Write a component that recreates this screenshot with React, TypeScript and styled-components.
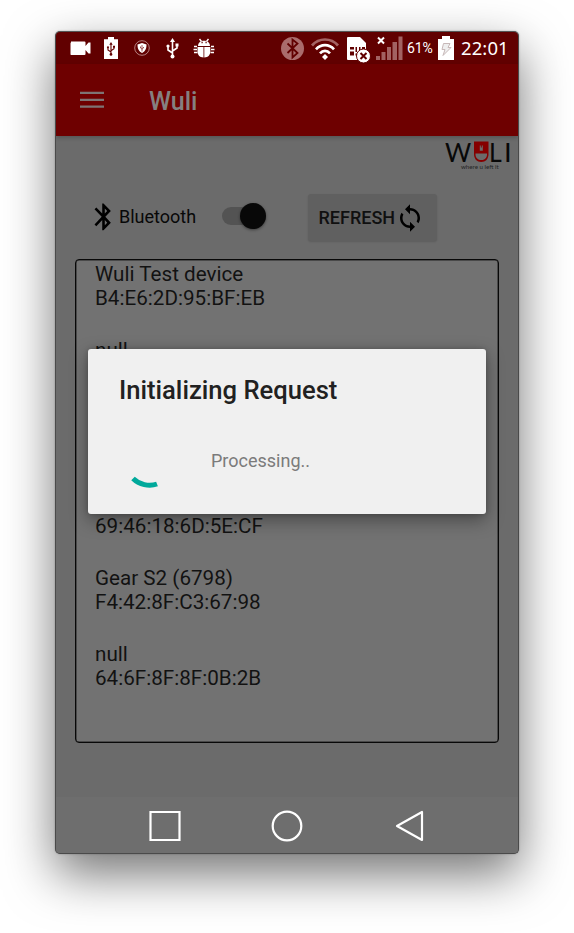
import React from "react";
import styled, { createGlobalStyle } from "styled-components";

const GlobalStyle = createGlobalStyle`
  * { box-sizing: border-box; }
  body { margin: 0; background: #fff; font-family: Roboto, "Liberation Sans", sans-serif; }
  svg { display: block; flex: none; }
`;

const Stage = styled.main`
  height: 933px;
  padding: 31px 55px 0;
  overflow: hidden;
`;

const Phone = styled.div`
  width: 464px;
  height: 823px;
  border-radius: 5px;
  border: 1px solid #4a4a4a;
  border-top-color: #555;
  background: #6b6b6b;
  box-shadow: 0 20px 50px rgba(0, 0, 0, 0.55), 0 0 2px rgba(0, 0, 0, 0.3);
`;

const Screen = styled.div`
  position: relative;
  height: 100%;
  border-radius: 4px;
  overflow: hidden;
  display: flex;
  flex-direction: column;
`;

const StatusBar = styled.header`
  height: 32px;
  flex: none;
  background: #610000;
  display: flex;
  justify-content: space-between;
  color: #fff;
`;

const StatusGroup = styled.div`
  display: flex;
  align-items: center;
  height: 32px;
`;

const Battery = styled.span`
  font-size: 14px;
  letter-spacing: -0.1px;
  width: 31px;
  margin-left: 4px;
  white-space: nowrap;
`;

const Clock = styled.time`
  font: 18.5px "Noto Sans", sans-serif;
  width: 64px;
  margin-top: -2px;
  padding-left: 7px;
  letter-spacing: 0.1px;
  white-space: nowrap;
`;

const AppBar = styled.div`
  height: 72px;
  flex: none;
  background: #6e0000;
  display: flex;
  align-items: center;
  padding-left: 24px;
  gap: 45px;
  box-shadow: 0 2px 4px rgba(0, 0, 0, 0.2);
  z-index: 1;
`;

const AppTitle = styled.h1`
  margin: 2px 0 0;
  font-size: 25px;
  font-weight: 500;
  color: #858080;
`;

const Content = styled.section`
  flex: 1;
  min-height: 0;
`;

const Brand = styled.div`
  display: flex;
  flex-direction: column;
  align-items: flex-end;
  height: 58px;
  padding: 4px 4px 0 0;
`;

const BrandName = styled.div`
  display: flex;
  height: 24px;
  color: #080808;
  font: 27.5px/24px Lato, sans-serif;
`;

const BrandLetter = styled.span<{ $width: number; $scale?: number }>`
  width: ${(p) => p.$width}px;
  transform: scaleX(${(p) => p.$scale ?? 1});
  transform-origin: left;
`;

const Tagline = styled.div`
  width: 53px;
  font: 6.2px/7px Lato, sans-serif;
  color: #242424;
  margin-top: -1px;
  white-space: nowrap;
`;

const Controls = styled.div`
  display: flex;
  align-items: center;
  height: 48px;
  padding-left: 38px;
`;

const BluetoothIcon = styled.svg`
  margin-top: -2px;
`;

const ControlLabel = styled.span`
  font-size: 18px;
  width: 110px;
  padding-left: 7px;
  margin-top: -3px;
  color: #080808;
`;

const SwitchTrack = styled.div`
  display: flex;
  align-items: center;
  justify-content: flex-end;
  width: 44px;
  height: 18px;
  border-radius: 9px;
  background: #535353;
  margin-top: -4px;
`;

const SwitchThumb = styled.div`
  width: 26px;
  height: 26px;
  border-radius: 50%;
  background: #080808;
  box-shadow: 0 1px 3px rgba(0, 0, 0, 0.45);
`;

const RefreshButton = styled.button`
  display: flex;
  align-items: center;
  width: 129px;
  height: 47px;
  margin: -1px 0 0 41.5px;
  padding: 0 0 0 11px;
  border: 0;
  border-radius: 3px;
  background: #606060;
  box-shadow: 0 1px 2px rgba(0, 0, 0, 0.14);
  color: #101010;
  font: 500 18px Roboto, sans-serif;
`;

const DeviceList = styled.ul`
  list-style: none;
  margin: 17px 0 0 18.5px;
  width: 424.5px;
  height: 484px;
  padding: 2px 0 0 19.5px;
  border: 1px solid #080808;
  border-radius: 4px;
  background: #727272;
  box-shadow: inset 0 0 0 0.5px #202020;
  overflow: hidden;
`;

const Device = styled.li`
  height: 76px;
  font-size: 20.65px;
  line-height: 24px;
  color: #121212;
`;

const Line = styled.div``;

const NavBar = styled.nav`
  height: 56px;
  flex: none;
  background: #6e6e6e;
  display: flex;
  align-items: center;
  padding: 2px 93px 0 90px;
  justify-content: space-between;
`;

const Dialog = styled.div`
  position: absolute;
  left: 32px;
  top: 317px;
  width: 398px;
  height: 165px;
  border-radius: 3px;
  background: #f0f0f0;
  box-shadow: 0 6px 18px rgba(0, 0, 0, 0.38), 0 0 5px rgba(0, 0, 0, 0.18);
  z-index: 2;
  padding: 26px 31px 0;
`;

const DialogTitle = styled.h2`
  margin: 0;
  font-size: 25.6px;
  line-height: 31px;
  font-weight: 500;
  color: #212121;
  white-space: nowrap;
`;

const DialogBody = styled.div`
  display: flex;
  align-items: center;
  height: 62px;
  margin-top: 24px;
  gap: 30px;
  color: #7b7b7b;
  font-size: 18px;
`;

const ProgressText = styled.span`
  margin-top: -1px;
`;

const BLUETOOTH =
  "M17.71 7.71 12 2h-1v7.59L6.41 5 5 6.41 10.59 12 5 17.59 6.41 19 11 14.41V22h1l5.71-5.71-4.3-4.29 4.3-4.29zM13 5.83l1.88 1.88L13 9.59V5.83zm1.88 10.46L13 18.17v-3.76l1.88 1.88z";

const UsbMark = () => (
  <g fill="none" stroke="currentColor" strokeWidth="1.6">
    <path d="M7 3v15M7 15 2.5 12V8.500M7 13l4.500-3V7" />
    <path d="m7 0 2.500 4h-5z" fill="currentColor" stroke="none" />
    <circle cx="7" cy="18.500" r="2" fill="currentColor" stroke="none" />
    <circle cx="2.500" cy="8" r="1.600" fill="currentColor" stroke="none" />
    <path d="M10 5.500h3v3h-3z" fill="currentColor" stroke="none" />
  </g>
);

const LeftStatusIcons = () => (
  <svg width="166" height="32" viewBox="0 0 166 32" fill="#fff">
    <path d="M15 9.500h13.500q1 0 1 1v3.500l3-3.500h2v11h-2l-3-3.500v4q0 1-1 1H15q-.5 0-.5-1v-10.500q0-1 .5-1z" />
    <path d="M52 5h6v2.200h4V27H48V7.200h4z" />
    <g color="#610000" transform="translate(50.300 10) scale(.67)"><UsbMark /></g>
    <circle cx="86" cy="16" r="7.300" fill="none" stroke="#c9a0a0" strokeWidth=".8" />
    <path d="m86 11 4.500 1.500c0 4-1 6.500-4.500 8.500-3.500-2-4.500-4.500-4.500-8.500z" />
    <path d="M86 13v6.500m-1.500-5v1.500l1.500 1.200 1.500-1.200V15" fill="none" stroke="#8a3030" strokeWidth=".8" />
    <g color="#fff" transform="translate(109.500 6)"><UsbMark /></g>
    <path d="m143.500 7 2 2.500M152.500 7l-2 2.500" stroke="#fff" strokeWidth="1.400" />
    <path d="M142 14c0-7 12-7 12 0z" />
    <path d="M141.500 15h6v10.500c-4 0-6-3-6-6zM148.300 15h6v4.500c0 3-2 6-6 6z" />
    <path d="M138 14.500h3M137.500 17.500h3.500M138 20.500h3.500M155 14.500h3M155 17.500h3.500M154.500 20.500h3.500" stroke="#fff" strokeWidth="1.700" />
    <path d="M145.500 10.500h1.200M149.500 10.500h1.200" stroke="#610000" strokeWidth="1.300" />
  </svg>
);

const SignalIcons = () => (
  <svg width="122" height="32" viewBox="0 0 122 32">
    <circle cx="11.500" cy="16.500" r="11.500" fill="#aa6c6c" />
    <path d="m6.500 11.500 10 9.500-5 4.500v-18l5 4-10 9.500" fill="none" stroke="#610000" strokeWidth="1.800" />
    <g fill="none" strokeWidth="2.700">
      <path d="M31 13.500c7-8 19-8 26 0" stroke="#a46464" />
      <path d="M35 17.300c5-5.500 13-5.500 18 0" stroke="#fff" />
      <path d="M39 21.300c3-3.300 7-3.300 10 0" stroke="#fff" />
    </g>
    <path d="m44 22 3 3-3 3-3-3z" fill="#fff" />
    <path d="M67 5h12l6 6v17H67q-1 0-1-1V6q0-1 1-1z" fill="#fff" />
    <path d="M69 15h4v2.500h-4zM69 19.500h4v4h-4zM74.500 15h1.500v5h-1.500zM78 15h1.500v4H78zM81 15h3v2h-3zM74.500 21.500h1.500v2h-1.500z" fill="#610000" />
    <circle cx="82.500" cy="24" r="7" fill="#fff" stroke="#610000" />
    <path d="m79.500 21 6 6m0-6-6 6" stroke="#610000" strokeWidth="2" />
    <path d="M95 24h4v4h-4zM100.500 20h4v8h-4zM106 15h4v13h-4zM111.500 10h4.500v18h-4.500zM117.500 4.500h4V28h-4z" fill="#a26262" />
    <path d="m97 5.500 6 6m0-6-6 6" stroke="#fff" strokeWidth="2" />
  </svg>
);

const BatteryIcon = () => (
  <svg width="16" height="32" viewBox="0 0 16 32">
    <path d="M4 4h8v3h4v21H0V7h4z" fill="#fff" />
    <path d="M5.500 11.500H12l-2 4h3l-8 8 2-6H4z" fill="#eee" stroke="#c7b8b8" />
  </svg>
);

const LockMark = () => (
  <svg width="15" height="23" viewBox="0 0 15 23">
    <path d="M0 1.500h14.500v12.500c0 5-3 8-7.250 8S0 19 0 14z" fill="#850000" />
    <path d="M1.500 13.500h11.500v1c0 3.500-2.500 5.500-5.750 5.500s-5.750-2-5.750-5.500z" fill="#6b6b6b" />
    <path d="M5.800 5.500h3v5.200h-3z" fill="#6b6b6b" />
    <path d="M6.800 5h1v2.500h-1z" fill="#850000" />
  </svg>
);

const devices: [string, string][] = [
  ["Wuli Test device", "B4:E6:2D:95:BF:EB"],
  ["null", ""],
  ["", ""],
  ["", "69:46:18:6D:5E:CF"],
  ["Gear S2 (6798)", "F4:42:8F:C3:67:98"],
  ["null", "64:6F:8F:8F:0B:2B"],
];

export default function App() {
  return (
    <Stage>
      <GlobalStyle />
      <Phone>
        <Screen>
          <StatusBar>
            <StatusGroup><LeftStatusIcons /></StatusGroup>
            <StatusGroup>
              <SignalIcons />
              <Battery>61%</Battery>
              <BatteryIcon />
              <Clock>22:01</Clock>
            </StatusGroup>
          </StatusBar>
          <AppBar>
            <svg width="24" height="18" viewBox="0 0 24 18" fill="#7e7474">
              <path d="M0 .7h24v2.300H0zM0 7.700h24V10H0zM0 14.500h24v2.300H0z" />
            </svg>
            <AppTitle>Wuli</AppTitle>
          </AppBar>
          <Content>
            <Brand>
              <BrandName>
                <BrandLetter $width={29} $scale={0.92}>W</BrandLetter>
                <LockMark />
                <BrandLetter $width={15} $scale={0.9}>L</BrandLetter>
                <BrandLetter $width={10}>I</BrandLetter>
              </BrandName>
              <Tagline>where u left it</Tagline>
            </Brand>
            <Controls>
              <BluetoothIcon width="18" height="28" viewBox="4.600 1.700 14 20.800" preserveAspectRatio="none">
                <path d={BLUETOOTH} />
              </BluetoothIcon>
              <ControlLabel>Bluetooth</ControlLabel>
              <SwitchTrack><SwitchThumb /></SwitchTrack>
              <RefreshButton>
                REFRESH
                <svg width="30" height="30" viewBox="0 0 24 24">
                  <path d="M12 4V1L8 5l4 4V6c3.310 0 6 2.690 6 6 0 1.010-.25 1.970-.7 2.800l1.460 1.460C19.540 15.030 20 13.570 20 12c0-4.420-3.580-8-8-8zm0 14c-3.310 0-6-2.690-6-6 0-1.010.25-1.970.7-2.800L5.240 7.740C4.460 8.970 4 10.430 4 12c0 4.420 3.580 8 8 8v3l4-4-4-4v3z" />
                </svg>
              </RefreshButton>
            </Controls>
            <DeviceList>
              {devices.map(([name, address], i) => (
                <Device key={i}>
                  <Line>{name || "\u00a0"}</Line>
                  <Line>{address}</Line>
                </Device>
              ))}
            </DeviceList>
          </Content>
          <NavBar>
            <svg width="36" height="36" viewBox="0 0 36 36" fill="none" stroke="#fff" strokeWidth="2.200"><path d="M4.500 4h29v28h-29z" /></svg>
            <svg width="36" height="36" viewBox="2 0 36 36" fill="none" stroke="#fff" strokeWidth="2.200"><circle cx="18" cy="18" r="14.300" /></svg>
            <svg width="30" height="36" viewBox="0 0 30 36" fill="none" stroke="#fff" strokeWidth="2.200" strokeLinejoin="round"><path d="M27 4v28L2 18z" /></svg>
          </NavBar>
          <Dialog role="dialog">
            <DialogTitle>Initializing Request</DialogTitle>
            <DialogBody>
              <svg width="62" height="62" viewBox="0 0 62 62" fill="none" stroke="#00a99b" strokeWidth="5">
                <path d="M14 48.500C20 54.500 30 57 38 54" />
              </svg>
              <ProgressText>Processing..</ProgressText>
            </DialogBody>
          </Dialog>
        </Screen>
      </Phone>
    </Stage>
  );
}
